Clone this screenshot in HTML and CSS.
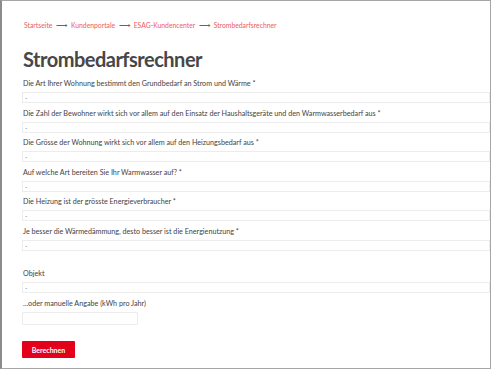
FILE: index.html
```html
<!DOCTYPE html>
<html lang="de">
<head>
  <meta charset="UTF-8" />
  <meta name="viewport" content="width=device-width, initial-scale=1.0" />
  <title>Strombedarfsrechner</title>
  <link rel="stylesheet" href="styles.css">
</head>
<body>
  <div class="frame">
    <nav class="crumbs">
      <a href="#">Startseite</a>
      <span class="arrow">&#10230;</span>
      <a href="#">Kundenportale</a>
      <span class="arrow">&#10230;</span>
      <a href="#">ESAG-Kundencenter</a>
      <span class="arrow">&#10230;</span>
      <a href="#">Strombedarfsrechner</a>
    </nav>

    <h1>Strombedarfsrechner</h1>

    <form class="calc">
      <div class="row">
        <label for="art">Die Art Ihrer Wohnung bestimmt den Grundbedarf an Strom und Wärme *</label>
        <select id="art"><option>-</option></select>
      </div>
      <div class="row">
        <label for="bewohner">Die Zahl der Bewohner wirkt sich vor allem auf den Einsatz der Haushaltsgeräte und den Warmwasserbedarf aus *</label>
        <select id="bewohner"><option>-</option></select>
      </div>
      <div class="row">
        <label for="groesse">Die Grösse der Wohnung wirkt sich vor allem auf den Heizungsbedarf aus *</label>
        <select id="groesse"><option>-</option></select>
      </div>
      <div class="row">
        <label for="warmwasser">Auf welche Art bereiten Sie Ihr Warmwasser auf? *</label>
        <select id="warmwasser"><option>-</option></select>
      </div>
      <div class="row">
        <label for="heizung">Die Heizung ist der grösste Energieverbraucher *</label>
        <select id="heizung"><option>-</option></select>
      </div>
      <div class="row">
        <label for="daemmung">Je besser die Wärmedämmung, desto besser ist die Energienutzung *</label>
        <select id="daemmung"><option>-</option></select>
      </div>

      <div class="row row-gap">
        <label for="objekt">Objekt</label>
        <select id="objekt"><option>-</option></select>
      </div>
      <div class="row">
        <label for="manuell">...oder manuelle Angabe (kWh pro Jahr)</label>
        <input type="text" id="manuell" />
      </div>

      <button type="submit">Berechnen</button>
    </form>
  </div>
</body>
</html>
```

FILE: styles.css
```css
html, body { margin: 0; padding: 0; background: #fff; }
body { font-family: Lato, "Open Sans", sans-serif; color: #4a4a4a; }

.frame {
  box-sizing: border-box;
  height: 369px;
  width: 491px;
  border-top: 1px solid #a6a6a6;
  border-left: 2px solid #8c8c8c;
  border-right: 1px solid #a6a6a6;
  border-bottom: 1px solid #a6a6a6;
  padding-left: 20px;
  overflow: hidden;
}

.crumbs { margin-top: 19px; font-size: 6.8px; line-height: 10px; padding-left: 2px; }
.crumbs a { color: #f05a5a; text-decoration: none; }
.crumbs .arrow { color: #666; margin: 0 2px; font-size: 8px; }

h1 { margin: 17px 0 0 1px; font-size: 20px; line-height: 24px; font-weight: 700; color: #474747; letter-spacing: -0.5px; }

.calc { margin-top: 8px; }
.row { margin-bottom: 5.6px; }
.row label { display: block; font-size: 7.2px; line-height: 10px; margin: 0 0 3px 1px; color: #444; }
.row select {
  display: block;
  width: 100%;
  height: 11px;
  margin: 0;
  padding: 0 0 0 2px;
  border: 1px solid #ececec;
  background: #fff;
  font-family: inherit;
  font-size: 6px;
  color: #555;
  -webkit-appearance: none;
  appearance: none;
}
.row-gap { margin-top: 18px; }
.row input {
  display: block;
  box-sizing: border-box;
  width: 116px;
  height: 13px;
  margin: 0;
  border: 1px solid #ececec;
  border-radius: 1px;
}

.calc button {
  margin-top: 11px;
  width: 53px;
  height: 17px;
  padding: 0;
  border: none;
  border-radius: 1px;
  background: #e2001a;
  color: #fff;
  font-family: inherit;
  font-size: 7px;
  font-weight: 700;
}
```
